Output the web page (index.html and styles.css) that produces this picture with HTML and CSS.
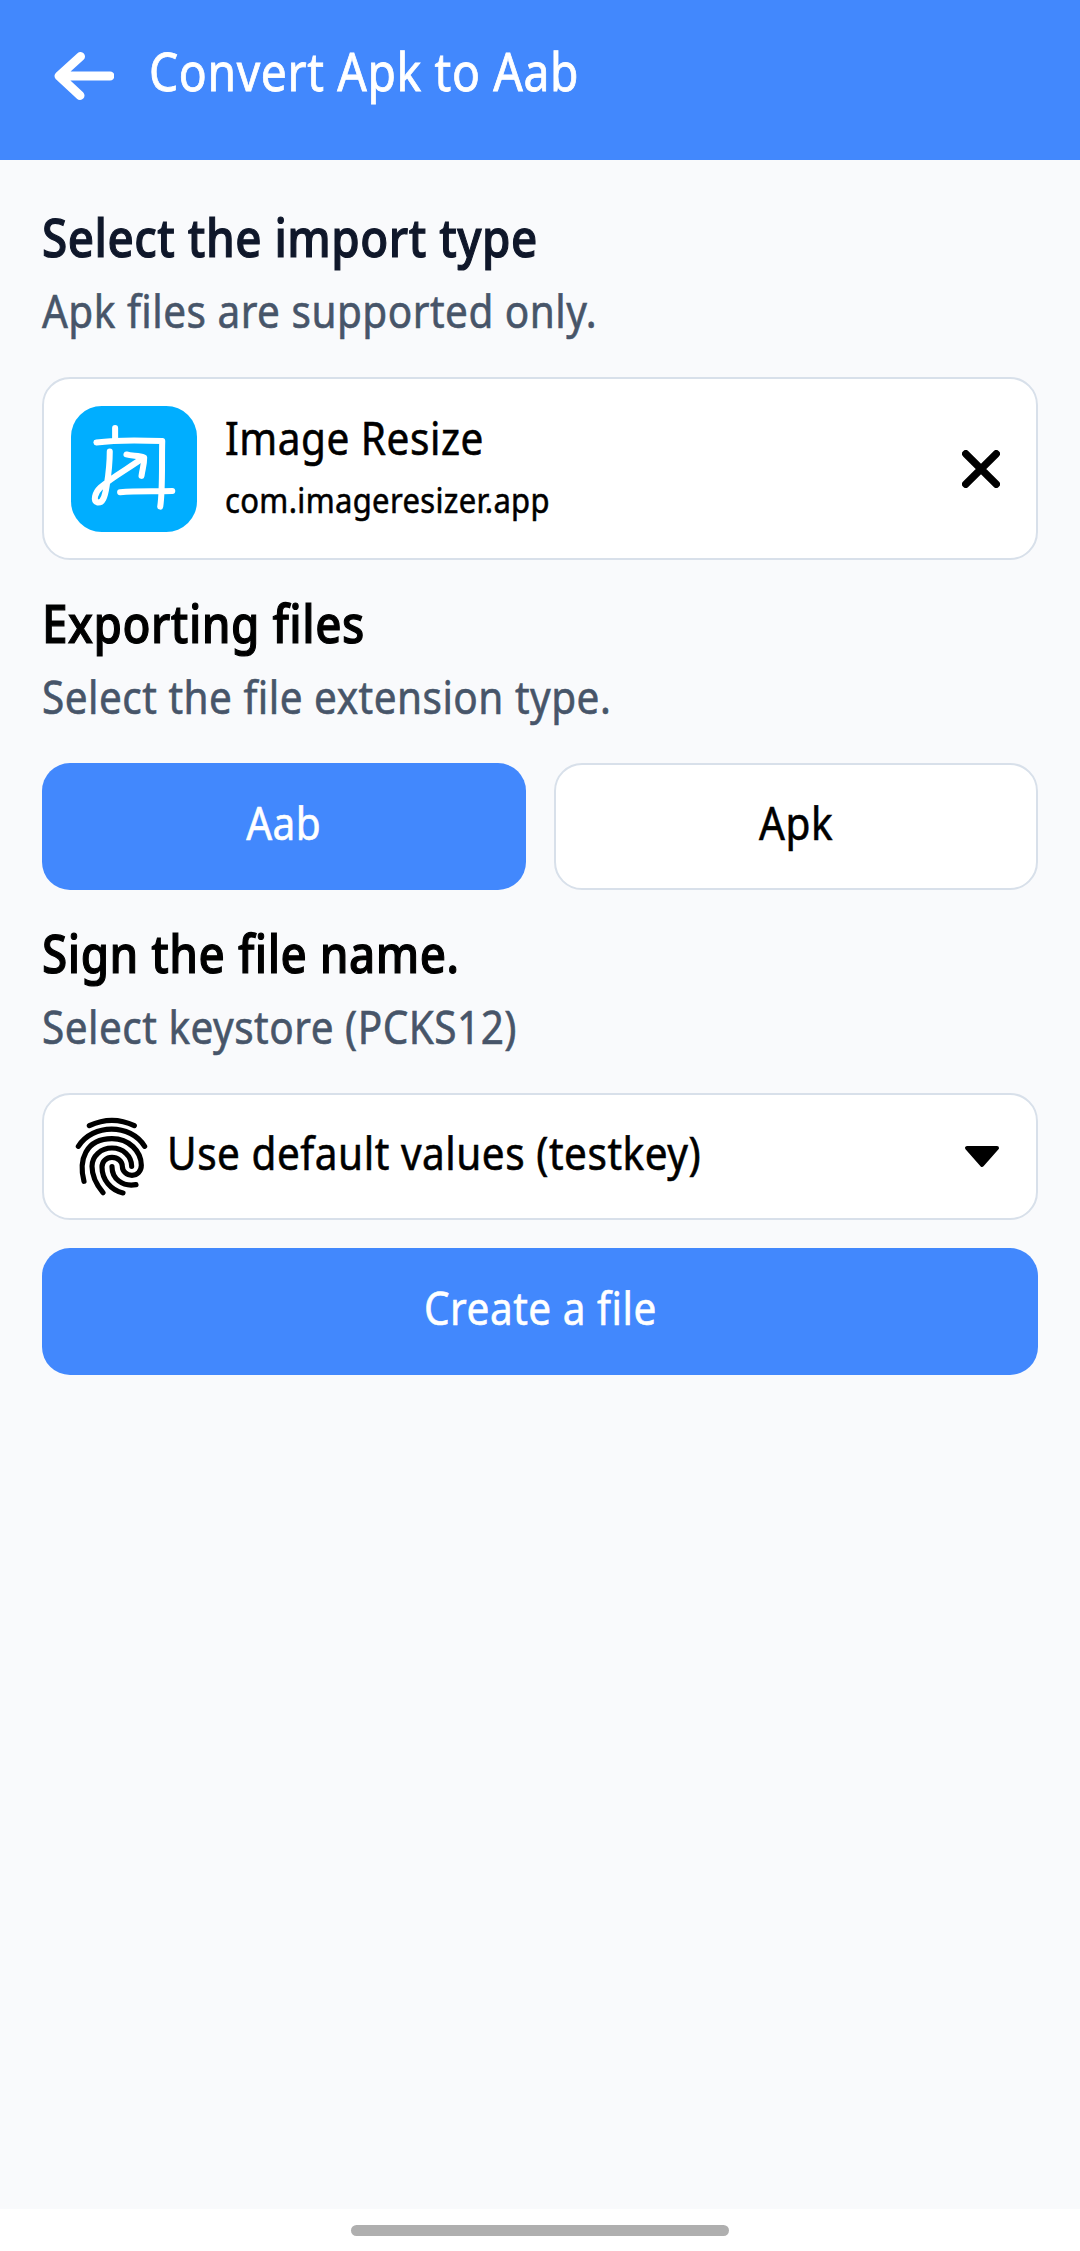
FILE: index.html
```html
<!DOCTYPE html>
<html lang="en">
<head>
<meta charset="utf-8">
<title>Convert Apk to Aab</title>
<link rel="stylesheet" href="styles.css">
</head>
<body>
<div class="screen">
  <header class="topbar">
    <svg class="back" viewBox="0 0 64 56" fill="none" stroke="#fff" stroke-width="9" stroke-linecap="round" stroke-linejoin="round"><path d="M30.500 8.500L9 28L30 47.500M10 28H60"/></svg>
    <h1 class="title">Convert Apk to Aab</h1>
  </header>
  <main class="content">
    <section class="section">
      <h2 class="heading heading-ink">Select the import type</h2>
      <p class="hint">Apk files are supported only.</p>
      <div class="card app">
        <svg class="app-icon" viewBox="33 33 377 377" fill="none" stroke="#fff" stroke-linecap="round" stroke-linejoin="round">
          <rect x="33" y="33" width="377" height="377" rx="92" fill="#00aeff" stroke="none"/>
          <g stroke-width="18">
            <path d="M165 99V136M109 142C155 136 220 134 306 138C304 200 308 280 300 334M180 291C230 286 280 289 336 287"/>
            <path d="M149 169C149 210 144 245 140 270C134 310 127 323 113 322C97 318 105 292 121 277C155 246 205 220 249 188"/>
            <path d="M199 178C215 183 235 181 252 187C252 210 247 220 244 242"/>
          </g>
        </svg>
        <div class="app-text">
          <div class="label">Image Resize</div>
          <div class="package">com.imageresizer.app</div>
        </div>
        <svg class="close" viewBox="0 0 38 38" stroke="#000" stroke-width="7.500" stroke-linecap="round"><path d="M3.800 3.800L34.200 34.200M34.200 3.800L3.800 34.200"/></svg>
      </div>
    </section>
    <section class="section">
      <h2 class="heading">Exporting files</h2>
      <p class="hint">Select the file extension type.</p>
      <div class="choices">
        <div class="button primary"><span class="label centered">Aab</span></div>
        <div class="button card"><span class="label centered">Apk</span></div>
      </div>
    </section>
    <section class="section">
      <h2 class="heading">Sign the file name.</h2>
      <p class="hint">Select keystore (PCKS12)</p>
      <div class="card select">
        <svg class="fingerprint" viewBox="40 40 230 255" fill="none" stroke="#000" stroke-width="15.500" stroke-linecap="round" stroke-linejoin="round">
          <path d="M89 75Q157 43 224 75"/>
          <path d="M56 137C100 68 212 68 255 137"/>
          <path d="M73 242C56 178 78 114 157 114C208 114 245 152 245 194C245 212 233 224 217 224C201 224 188 212 188 197C188 182 174 170 157 170C140 170 127 182 127 199C127 237 153 268 190 277"/>
          <path d="M130 276C109 251 97 228 97 197C97 166 124 142 157 142C190 142 216 166 216 197"/>
          <path d="M157 198C157 234 188 259 229 252"/>
        </svg>
        <div class="label select-text">Use default values (testkey)</div>
        <svg class="caret" viewBox="0 0 36 24" stroke="#000" stroke-width="4" stroke-linejoin="round"><path d="M3 3H33L18 20Z"/></svg>
      </div>
    </section>
    <div class="button primary create"><span class="label centered">Create a file</span></div>
  </main>
  <footer class="navbar"><div class="pill"></div></footer>
</div>
</body>
</html>
```
FILE: styles.css
```css
* { box-sizing: border-box; }
body { margin: 0; background: #f9fafc; color: #000; font-family: "Noto Sans", sans-serif; font-weight: 400; -webkit-text-stroke: .6px currentColor; }
h1, h2, p { margin: 0; }
svg { display: block; flex: none; }

.screen { display: flex; flex-direction: column; width: 1080px; height: 2251px; }
.topbar { display: flex; align-items: flex-start; height: 160px; padding: 41px 0 0 50px; background: #4288fd; color: #fff; -webkit-text-stroke: .8px #fff; }
.back { width: 64px; height: 56px; margin-top: 7px; }
.title { margin-left: 35px; font-size: 52px; font-weight: 400; line-height: 60px; letter-spacing: .7px; white-space: nowrap; transform: scaleX(.89); transform-origin: left; }

.content { flex: 1; padding: 14px 42px 0; }
.section { padding-top: 27px; }
.heading { width: max-content; font-size: 53px; font-weight: 500; line-height: 72px; letter-spacing: .6px; transform: scaleX(.865); transform-origin: left; -webkit-text-stroke: 1.2px currentColor; }
.heading-ink { color: #0f172a; }
.hint { width: max-content; margin-bottom: 28px; font-size: 45px; line-height: 76px; letter-spacing: .55px; color: #475569; -webkit-text-stroke: .6px #475569; transform: scaleX(.9); transform-origin: left; }

.card { border: 2px solid #d8e0ea; border-radius: 28px; background: #fff; }
.app { display: flex; align-items: center; height: 183px; padding: 0 36px 0 27px; }
.app-icon { width: 126px; height: 126px; }
.app-text { flex: 1; margin-left: 28px; }
.label { font-size: 45px; line-height: 62px; letter-spacing: .6px; white-space: nowrap; transform: scaleX(.9); transform-origin: left; }
.centered { transform-origin: center; }
.package { font-size: 35px; line-height: 61px; letter-spacing: .4px; transform: scaleX(.885); transform-origin: left; }
.close { width: 38px; height: 38px; }

.choices { display: grid; grid-template-columns: 1fr 1fr; gap: 28px; }
.button { display: flex; align-items: center; justify-content: center; height: 127px; padding-bottom: 8px; border-radius: 28px; }
.primary { background: #4288fd; color: #fff; -webkit-text-stroke: .6px #fff; }
.create { margin-top: 28px; }

.select { display: flex; align-items: center; height: 127px; padding: 0 36px 0 29px; }
.fingerprint { width: 76.670px; height: 85px; }
.select-text { flex: 1; margin: 0 0 8px 17px; }
.caret { width: 36px; height: 24px; }

.navbar { display: flex; justify-content: center; height: 42px; padding-top: 16px; background: #fff; }
.pill { width: 378px; height: 11px; border-radius: 6px; background: #afafaf; }
```
